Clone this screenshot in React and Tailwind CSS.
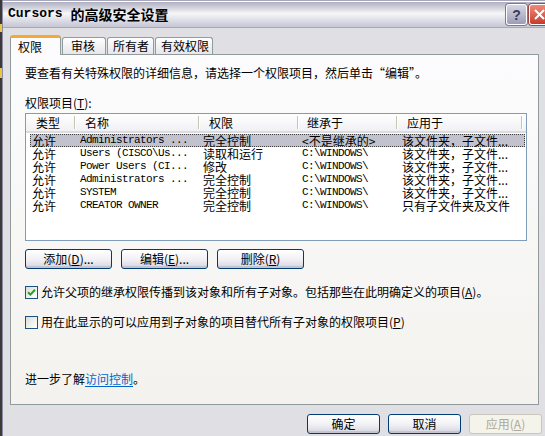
import React from "react";

const CJK = "font-['Noto_Sans_CJK_SC','Liberation_Sans',sans-serif]";
const MONO = "font-['Liberation_Mono','Noto_Sans_CJK_SC',monospace]";

function U({ children }) {
  return <span className="underline underline-offset-1">{children}</span>;
}

function Button({ children, w, disabled }) {
  return (
    <div
      className={`${w} h-[20px] rounded-[3px] border flex items-center justify-center text-[12px] leading-[14px] ${
        disabled
          ? "border-[#c9c7ba] bg-[#f5f4ea] text-[#aca899]"
          : "border-[#003c74] bg-gradient-to-b from-[#ffffff] via-[#f2f2f6] to-[#d6d5e0] text-black shadow-[inset_0_-2px_0_#c5c4d3]"
      }`}
    >
      {children}
    </div>
  );
}

function Checkbox({ checked }) {
  return (
    <div className="w-[13px] h-[13px] border border-[#1c5180] bg-gradient-to-br from-[#dcdcd7] to-[#ffffff] flex items-center justify-center shrink-0">
      {checked && (
        <svg width="9" height="9" viewBox="0 0 9 9">
          <path d="M1 4.2 L3.4 6.6 L8 1.8" stroke="#21a121" strokeWidth="2" fill="none" />
        </svg>
      )}
    </div>
  );
}

const rows = [
  ["允许", "Administrators ...", "完全控制", "<不是继承的>", "该文件夹，子文件..."],
  ["允许", "Users (CISCO\\Us...", "读取和运行", "C:\\WINDOWS\\", "该文件夹，子文件..."],
  ["允许", "Power Users (CI...", "修改", "C:\\WINDOWS\\", "该文件夹，子文件..."],
  ["允许", "Administrators ...", "完全控制", "C:\\WINDOWS\\", "该文件夹，子文件..."],
  ["允许", "SYSTEM", "完全控制", "C:\\WINDOWS\\", "该文件夹，子文件..."],
  ["允许", "CREATOR OWNER", "完全控制", "C:\\WINDOWS\\", "只有子文件夹及文件"],
];

function HeaderCell({ w, pl, children }) {
  return (
    <div className={`${w} h-full flex items-center shrink-0`}>
      <span className={`${pl} flex-1 text-[12px] leading-[14px]`}>{children}</span>
      <div className="w-[2px] h-[13px] border-l border-[#c7c5b2] border-r border-r-white" />
    </div>
  );
}

export default function App() {
  return (
    <div className={`w-[545px] h-[436px] overflow-hidden flex ${CJK} text-black`}>
      <div className="w-[2px] h-full bg-[#3b3a36] flex flex-col">
        <div className="h-[24px]" />
        <div className="h-[8px] bg-[#e8c64a]" />
        <div className="h-[36px]" />
        <div className="h-[10px] bg-[#e8c64a]" />
      </div>
      <div className="flex-1 flex flex-col border-l border-[#8c8ca6] bg-[#e0dfe3]">
        {/* Title bar */}
        <div className="h-[28px] shrink-0 flex items-center pl-[5px] bg-gradient-to-b from-[#a4a4b8] via-[#f6f6f9] to-[#c6c6d5] border-b border-[#a8a8bc] relative">
          <div className="absolute inset-x-0 top-[1px] h-[1px] bg-[#ffffff]" />
          <span className={`${MONO} font-bold text-[13px] leading-[16px]`}>Cursors&nbsp;</span>
          <span className="font-bold text-[14px] leading-[16px]">的高级安全设置</span>
          <div className="ml-auto flex items-center gap-[2px] mt-[2px]">
            <div className="w-[21px] h-[21px] rounded-[3px] border border-white bg-gradient-to-b from-[#d6d6e4] to-[#9c9cb8] flex items-center justify-center text-[#3a3a5a] font-bold text-[14px] leading-[16px] font-['Liberation_Sans',sans-serif] shadow-[0_0_0_1px_#7a7a98]">
              ?
            </div>
            <div className="w-[21px] h-[21px] rounded-[3px] border border-white bg-gradient-to-b from-[#f08a78] to-[#c8382c] flex items-center justify-center shadow-[0_0_0_1px_#9a4a4a] mr-[-5px]">
              <svg width="11" height="11" viewBox="0 0 11 11">
                <path d="M1 1 L10 10 M10 1 L1 10" stroke="white" strokeWidth="2" />
              </svg>
            </div>
          </div>
        </div>

        {/* Body */}
        <div className="flex-1 flex flex-col pt-[7px] pl-[7px]">
          {/* Tabs */}
          <div className="flex items-end h-[20px] mb-[-1px] relative z-10">
            <div className="w-[51px] h-[20px] rounded-t-[3px] border-x border-[#919b9c] border-t-[3px] border-t-[#f5a934] bg-[#fcfcfe] flex items-center pl-[7px] text-[12px] leading-[14px]">
              权限
            </div>
            <div className="w-[44px] h-[17px] mb-[1px] ml-[1px] rounded-t-[3px] border-x border-t border-[#919b9c] bg-gradient-to-b from-white to-[#e6e5ea] flex items-center pl-[8px] text-[12px] leading-[14px]">
              审核
            </div>
            <div className="w-[47px] h-[17px] mb-[1px] ml-[1px] rounded-t-[3px] border-x border-t border-[#919b9c] bg-gradient-to-b from-white to-[#e6e5ea] flex items-center pl-[5px] text-[12px] leading-[14px]">
              所有者
            </div>
            <div className="w-[58px] h-[17px] mb-[1px] ml-[1px] rounded-t-[3px] border-x border-t border-[#919b9c] bg-gradient-to-b from-white to-[#e6e5ea] flex items-center pl-[5px] text-[12px] leading-[14px]">
              有效权限
            </div>
          </div>

          {/* Panel */}
          <div className="w-[529px] h-[351px] border border-[#919b9c] bg-gradient-to-b from-[#fcfcfe] to-[#f3f2ee] flex flex-col pl-[14px]">
            <div className="mt-[10px] h-[16px] flex items-center text-[12px] leading-[14px]">
              要查看有关特殊权限的详细信息，请选择一个权限项目，然后单击“编辑”。
            </div>
            <div className="mt-[14px] h-[16px] flex items-center text-[12px] leading-[14px]">
              权限项目(<U>T</U>):
            </div>

            {/* List */}
            <div className="mt-[2px] w-[502px] h-[128px] border border-[#7f9db9] bg-white flex flex-col">
              <div className="h-[19px] shrink-0 flex bg-gradient-to-b from-white to-[#f1f0f4] border-b-[2px] border-[#dcdbe2]">
                <HeaderCell w="w-[50px]" pl="pl-[10px]">类型</HeaderCell>
                <HeaderCell w="w-[124px]" pl="pl-[9px]">名称</HeaderCell>
                <HeaderCell w="w-[99px]" pl="pl-[9px]">权限</HeaderCell>
                <HeaderCell w="w-[99px]" pl="pl-[8px]">继承于</HeaderCell>
                <HeaderCell w="w-[125px]" pl="pl-[9px]">应用于</HeaderCell>
              </div>
              <div className="pt-[1px] pl-[4px] pr-[1px] flex flex-col">
                {rows.map((r, i) => (
                  <div
                    key={i}
                    className={`h-[13px] flex items-center ${
                      i === 0 ? "outline-1 outline-dotted -outline-offset-1 outline-[#404040] bg-[#c2c2ce]" : ""
                    }`}
                  >
                    <div className="w-[48px] pl-[2px] text-[12px] leading-[13px] whitespace-nowrap shrink-0">
                      {r[0]}
                    </div>
                    <div className={`w-[123px] pl-[2px] ${MONO} text-[11px] tracking-[-0.6px] leading-[13px] whitespace-nowrap shrink-0`}>
                      {r[1]}
                    </div>
                    <div className="w-[99px] pl-[2px] text-[12px] leading-[13px] whitespace-nowrap shrink-0">
                      {r[2]}
                    </div>
                    <div
                      className={`w-[100px] pl-[2px] leading-[13px] whitespace-nowrap shrink-0 ${
                        i === 0 ? "text-[12px]" : `${MONO} text-[11px] tracking-[-0.6px]`
                      }`}
                    >
                      {r[3]}
                    </div>
                    <div className="flex-1 pl-[2px] text-[12px] leading-[13px] whitespace-nowrap">
                      {r[4]}
                    </div>
                  </div>
                ))}
              </div>
            </div>

            {/* Buttons */}
            <div className="mt-[8px] flex gap-[9px]">
              <Button w="w-[87px]">
                添加(<U>D</U>)...
              </Button>
              <Button w="w-[87px]">
                编辑(<U>E</U>)...
              </Button>
              <Button w="w-[87px]">
                删除(<U>R</U>)
              </Button>
            </div>

            {/* Checkboxes */}
            <div className="mt-[16px] h-[14px] flex items-center gap-[3px] text-[12px] leading-[14px]">
              <Checkbox checked />
              <span className="whitespace-nowrap">
                允许父项的继承权限传播到该对象和所有子对象。包括那些在此明确定义的项目(<U>A</U>)。
              </span>
            </div>
            <div className="mt-[16px] h-[14px] flex items-center gap-[3px] text-[12px] leading-[14px]">
              <Checkbox />
              <span className="whitespace-nowrap">
                用在此显示的可以应用到子对象的项目替代所有子对象的权限项目(<U>P</U>)
              </span>
            </div>

            <div className="mt-[42px] h-[16px] flex items-center text-[12px] leading-[14px]">
              进一步了解<span className="text-[#0066cc] underline underline-offset-2">访问控制</span>。
            </div>
          </div>

          {/* Bottom buttons */}
          <div className="mt-[9px] pl-[297px] flex gap-[8px]">
            <Button w="w-[73px]">确定</Button>
            <Button w="w-[73px]">取消</Button>
            <Button w="w-[73px]" disabled>
              应用(<U>A</U>)
            </Button>
          </div>
        </div>
      </div>
    </div>
  );
}
